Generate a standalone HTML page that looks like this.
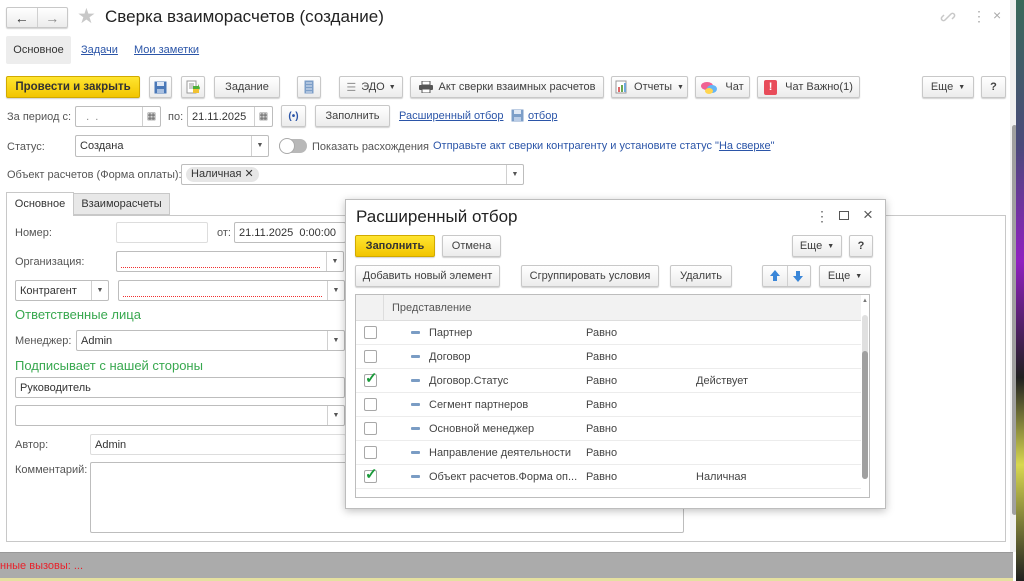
<!DOCTYPE html>
<html><head><meta charset="utf-8">
<style>
*{box-sizing:border-box;margin:0;padding:0}
body{width:1024px;height:581px;overflow:hidden;background:#fff;font-family:"Liberation Sans",Arial,sans-serif;font-size:11px;color:#404040;position:relative}
.a{position:absolute}
.btn{position:absolute;height:22px;border:1px solid #c8c8c8;border-radius:2px;background:linear-gradient(#fff,#ececec);box-shadow:0 1px 1px rgba(0,0,0,.18);display:flex;align-items:center;justify-content:center;color:#404040;font-size:11px;white-space:nowrap}
.yel{background:linear-gradient(#ffe530,#f2c500);border-color:#d1aa00;font-weight:bold;color:#333}
.fld{position:absolute;height:21px;border:1px solid #bdbdbd;border-radius:2px;background:#fff;padding-left:4px;padding-top:1px;line-height:19px;color:#333;font-size:11px}
.dd{position:absolute;right:0;top:0;bottom:0;width:17px;border-left:1px solid #d0d0d0;font-size:7px;color:#555;text-align:center;line-height:19px}
.lbl{position:absolute;color:#555;font-size:11px;line-height:14px}
.lnk{position:absolute;color:#2b55a8;text-decoration:underline;font-size:11px}
.grn{position:absolute;color:#38a84f;font-size:13px}
.red{position:absolute;left:4px;right:22px;bottom:3px;height:1px;background:repeating-linear-gradient(90deg,#f03030 0 1px,transparent 1px 2px)}
.row{position:absolute;left:0;right:8px;height:24px;border-bottom:1px solid #ececec}
.cb{position:absolute;left:8px;top:5px;width:13px;height:13px;border:1px solid #a8a8a8;border-radius:2px;background:#fff}
.dash{position:absolute;left:55px;top:10px;width:9px;height:3px;background:#7a9cc4;border-radius:1px}
.rt{position:absolute;top:6px;color:#444}
</style></head><body>

<div class="btn" style="left:6px;top:7px;width:62px;height:21px;justify-content:space-between;padding:0">
 <span style="width:30px;text-align:center;font-size:14px;color:#333">&#8592;</span><span style="width:1px;height:19px;background:#d0d0d0"></span><span style="width:30px;text-align:center;font-size:14px;color:#888">&#8594;</span></div>
<div class="a" style="left:77px;top:4px;font-size:21px;color:#c8c8c8">&#9733;</div>
<div class="a" style="left:105px;top:7px;font-size:17px;color:#222">Сверка взаиморасчетов (создание)</div>
<svg class="a" style="left:940px;top:9px" width="16" height="16" viewBox="0 0 16 16"><g fill="none" stroke="#c8c8c8" stroke-width="1.5"><path d="M7 9l-2 2a2 2 0 01-3-3l2-2M9 7l2-2a2 2 0 013 3l-2 2M6 10l4-4"/></g></svg>
<div class="a" style="left:972px;top:8px;font-size:14px;color:#aaa;line-height:16px">&#8942;</div>
<div class="a" style="left:993px;top:7px;font-size:14px;color:#aaa">&#215;</div>

<div class="a" style="left:6px;top:36px;width:65px;height:28px;background:#ededed;border-radius:2px;line-height:28px;text-align:center;color:#333">Основное</div>
<div class="lnk" style="left:81px;top:44px">Задачи</div>
<div class="lnk" style="left:134px;top:44px">Мои заметки</div>

<div class="btn yel" style="left:6px;top:76px;width:134px;font-size:11.5px">Провести и закрыть</div>
<div class="btn" style="left:149px;top:76px;width:23px"><svg width="13" height="13"><rect x="0.5" y="0.5" width="12" height="12" fill="#4a78b8"/><rect x="3" y="1" width="7" height="4" fill="#dfe8f5"/><rect x="3" y="8" width="7" height="4" fill="#a9c0e0"/></svg></div>
<div class="btn" style="left:181px;top:76px;width:24px"><svg width="14" height="14"><rect x="1" y="1" width="9" height="12" fill="#fff" stroke="#999"/><path d="M3 4h5M3 6h5M3 8h4" stroke="#999"/><path d="M7 6l5 0 0-2 2 4-2 4 0-2-5 0z" fill="#4caf3a"/><rect x="7" y="9" width="6" height="4" fill="#f1c232"/></svg></div>
<div class="btn" style="left:214px;top:76px;width:66px">Задание</div>
<div class="btn" style="left:297px;top:76px;width:24px"><svg width="10" height="14"><rect x="0.5" y="0.5" width="9" height="13" fill="#7c9ec8"/><path d="M2 3h6M2 6h6M2 9h6M2 12h6" stroke="#dfe8f5"/></svg></div>
<div class="btn" style="left:339px;top:76px;width:64px"><span style="color:#999;margin-right:5px">&#9776;</span>ЭДО <span style="font-size:7px;margin-left:4px">&#9660;</span></div>
<div class="btn" style="left:410px;top:76px;width:194px"><svg width="14" height="12" style="margin-right:6px"><rect x="3" y="0" width="8" height="4" fill="#fff" stroke="#555"/><rect x="0" y="4" width="14" height="5" rx="1" fill="#555"/><rect x="3" y="8" width="8" height="4" fill="#fff" stroke="#555"/></svg>Акт сверки взаимных расчетов</div>
<div class="btn" style="left:611px;top:76px;width:77px"><svg width="14" height="14" style="margin-right:5px"><rect x="1" y="1" width="10" height="12" fill="#fff" stroke="#999"/><rect x="3" y="7" width="2" height="5" fill="#e06666"/><rect x="6" y="5" width="2" height="7" fill="#6aa84f"/><rect x="9" y="3" width="2" height="9" fill="#6fa8dc"/></svg>Отчеты <span style="font-size:7px;margin-left:5px">&#9660;</span></div>
<div class="btn" style="left:695px;top:76px;width:55px"><svg width="16" height="13" style="margin-right:8px"><ellipse cx="6" cy="5" rx="6" ry="4" fill="#f06292"/><ellipse cx="11" cy="8" rx="5" ry="4" fill="#64b5f6"/><ellipse cx="8" cy="10" rx="4" ry="3" fill="#ffd54f"/></svg>Чат</div>
<div class="btn" style="left:757px;top:76px;width:103px"><span style="display:inline-block;width:13px;height:15px;background:#e84c5a;color:#fff;font-weight:bold;text-align:center;line-height:15px;border-radius:2px;margin-right:8px">!</span>Чат Важно(1)</div>
<div class="btn" style="left:922px;top:76px;width:52px">Еще <span style="font-size:7px;margin-left:5px">&#9660;</span></div>
<div class="btn" style="left:981px;top:76px;width:25px;font-weight:bold">?</div>

<div class="lbl" style="left:7px;top:110px">За период с:</div>
<div class="fld" style="left:75px;top:106px;width:86px;color:#888">&nbsp; .&nbsp; .<div class="dd" style="width:18px;font-size:10px;color:#666">&#9638;</div></div>
<div class="lbl" style="left:168px;top:110px">по:</div>
<div class="fld" style="left:187px;top:106px;width:86px">21.11.2025<div class="dd" style="width:18px;font-size:10px;color:#666">&#9638;</div></div>
<div class="btn" style="left:281px;top:105px;width:25px;color:#2b55a8;font-weight:bold;font-size:10px">(•)</div>
<div class="btn" style="left:315px;top:105px;width:75px">Заполнить</div>
<div class="lnk" style="left:399px;top:110px">Расширенный отбор</div>
<svg class="a" style="left:511px;top:109px" width="13" height="13"><rect x="0.5" y="0.5" width="12" height="12" fill="#7c9ec8"/><rect x="3" y="1" width="7" height="4" fill="#dfe8f5"/><rect x="3" y="8" width="7" height="4" fill="#b9cce6"/></svg>
<div class="lnk" style="left:528px;top:110px">отбор</div>

<div class="lbl" style="left:7px;top:140px">Статус:</div>
<div class="fld" style="left:75px;top:135px;width:194px;height:22px">Создана<div class="dd" style="line-height:20px">&#9660;</div></div>
<div class="a" style="left:279px;top:139px;width:28px;height:14px;border-radius:7px;background:#b8b8b8"></div>
<div class="a" style="left:279px;top:138px;width:16px;height:16px;border-radius:8px;background:#fff;border:1px solid #aaa"></div>
<div class="lbl" style="left:312px;top:140px">Показать расхождения</div>
<div class="a" style="left:433px;top:140px;color:#2b55a8">Отправьте акт сверки контрагенту и установите статус "<u>На сверке</u>"</div>

<div class="lbl" style="left:7px;top:168px">Объект расчетов (Форма оплаты):</div>
<div class="fld" style="left:181px;top:164px;width:343px;height:21px;padding-top:0"><span style="display:inline-block;background:#e6e6e6;border-radius:9px;padding:0 5px;line-height:15px;margin-top:2px">Наличная ✕</span><div class="dd">&#9660;</div></div>

<div class="a" style="left:6px;top:215px;width:1000px;height:327px;border:1px solid #c8c8c8"></div>
<div class="a" style="left:6px;top:192px;width:68px;height:24px;border:1px solid #c8c8c8;border-bottom:none;background:#fff;line-height:22px;text-align:center;color:#333">Основное</div>
<div class="a" style="left:73px;top:193px;width:97px;height:22px;border:1px solid #c8c8c8;background:#e8e8e8;line-height:20px;text-align:center;color:#333">Взаиморасчеты</div>

<div class="lbl" style="left:15px;top:226px">Номер:</div>
<div class="fld" style="left:116px;top:222px;width:92px;border-color:#ddd"></div>
<div class="lbl" style="left:217px;top:226px">от:</div>
<div class="fld" style="left:234px;top:222px;width:112px">21.11.2025&nbsp; 0:00:00</div>
<div class="lbl" style="left:15px;top:255px">Организация:</div>
<div class="fld" style="left:116px;top:251px;width:228px"><div class="red"></div><div class="dd">&#9660;</div></div>
<div class="fld" style="left:15px;top:280px;width:94px">Контрагент<div class="dd">&#9660;</div></div>
<div class="fld" style="left:118px;top:280px;width:227px"><div class="red"></div><div class="dd">&#9660;</div></div>
<div class="grn" style="left:15px;top:307px">Ответственные лица</div>
<div class="lbl" style="left:15px;top:334px">Менеджер:</div>
<div class="fld" style="left:76px;top:330px;width:269px">Admin<div class="dd">&#9660;</div></div>
<div class="grn" style="left:15px;top:358px">Подписывает с нашей стороны</div>
<div class="fld" style="left:15px;top:377px;width:330px">Руководитель</div>
<div class="fld" style="left:15px;top:405px;width:330px"><div class="dd">&#9660;</div></div>
<div class="lbl" style="left:15px;top:438px">Автор:</div>
<div class="fld" style="left:90px;top:434px;width:256px;border-color:#ddd">Admin</div>
<div class="lbl" style="left:15px;top:463px">Комментарий:</div>
<div class="fld" style="left:90px;top:462px;width:594px;height:71px"></div>

<div class="a" style="left:0;top:552px;width:1013px;height:27px;background:#ababab;border-top:1px solid #999"></div>
<div class="a" style="left:0;top:560px;color:#e8202a;font-size:11px">нные вызовы: ...</div>
<div class="a" style="left:0;top:578px;width:1013px;height:3px;background:#e5e0a0"></div>
<div class="a" style="left:1010px;top:0;width:6px;height:552px;background:#f0f0f0"></div>
<div class="a" style="left:1012px;top:125px;width:5px;height:390px;background:#a0a0a0;border-radius:3px"></div>
<div class="a" style="left:1016px;top:0;width:8px;height:581px;background:linear-gradient(#3a6a5a,#4a4a7a 25%,#9020c0 45%,#202020 65%,#d8d850 80%,#202020)"></div>

<div class="a" style="left:345px;top:199px;width:541px;height:310px;background:#fff;border:1px solid #bdbdbd;box-shadow:0 2px 8px rgba(0,0,0,.25)">
 <div class="a" style="left:10px;top:7px;font-size:17px;color:#222">Расширенный отбор</div>
 <div class="a" style="left:469px;top:8px;font-size:14px;color:#666">&#8942;</div>
 <div class="a" style="left:493px;top:11px;width:10px;height:9px;border:1.5px solid #555"></div>
 <div class="a" style="left:517px;top:5px;font-size:17px;color:#555">&#215;</div>
 <div class="btn yel" style="left:9px;top:35px;width:80px">Заполнить</div>
 <div class="btn" style="left:96px;top:35px;width:59px">Отмена</div>
 <div class="btn" style="left:446px;top:35px;width:50px">Еще <span style="font-size:7px;margin-left:5px">&#9660;</span></div>
 <div class="btn" style="left:503px;top:35px;width:24px;font-weight:bold">?</div>
 <div class="btn" style="left:9px;top:65px;width:145px">Добавить новый элемент</div>
 <div class="btn" style="left:175px;top:65px;width:138px">Сгруппировать условия</div>
 <div class="btn" style="left:324px;top:65px;width:62px">Удалить</div>
 <div class="btn" style="left:416px;top:65px;width:49px;padding:0;justify-content:space-between"><svg width="24" height="20"><path d="M12 4l5 6h-3v5h-4v-5H7z" fill="#3a86d8"/></svg><span style="width:1px;height:20px;background:#d0d0d0"></span><svg width="23" height="20"><path d="M11 16l5-6h-3V5H9v5H6z" fill="#3a86d8"/></svg></div>
 <div class="btn" style="left:473px;top:65px;width:52px">Еще <span style="font-size:7px;margin-left:5px">&#9660;</span></div>
 <div class="a" style="left:9px;top:94px;width:515px;height:204px;border:1px solid #bdbdbd;overflow:hidden">
  <div class="a" style="left:0;top:0;right:8px;height:26px;background:#f2f2f2;border-bottom:1px solid #ddd"></div>
  <div class="a" style="left:27px;top:0;width:1px;height:26px;background:#ddd"></div>
  <div class="a" style="left:36px;top:7px;color:#555">Представление</div>
  <div class="row" style="top:26px"><div class="cb"></div><div class="dash"></div><div class="rt" style="left:73px">Партнер</div><div class="rt" style="left:230px">Равно</div></div>
  <div class="row" style="top:50px"><div class="cb"></div><div class="dash"></div><div class="rt" style="left:73px">Договор</div><div class="rt" style="left:230px">Равно</div></div>
  <div class="row" style="top:74px"><div class="cb"></div><div class="a" style="left:9px;top:0;color:#1a9a3a;font-size:15px;font-weight:bold">&#10003;</div><div class="dash"></div><div class="rt" style="left:73px">Договор.Статус</div><div class="rt" style="left:230px">Равно</div><div class="rt" style="left:340px">Действует</div></div>
  <div class="row" style="top:98px"><div class="cb"></div><div class="dash"></div><div class="rt" style="left:73px">Сегмент партнеров</div><div class="rt" style="left:230px">Равно</div></div>
  <div class="row" style="top:122px"><div class="cb"></div><div class="dash"></div><div class="rt" style="left:73px">Основной менеджер</div><div class="rt" style="left:230px">Равно</div></div>
  <div class="row" style="top:146px"><div class="cb"></div><div class="dash"></div><div class="rt" style="left:73px">Направление деятельности</div><div class="rt" style="left:230px">Равно</div></div>
  <div class="row" style="top:170px"><div class="cb"></div><div class="a" style="left:9px;top:0;color:#1a9a3a;font-size:15px;font-weight:bold">&#10003;</div><div class="dash"></div><div class="rt" style="left:73px">Объект расчетов.Форма оп...</div><div class="rt" style="left:230px">Равно</div><div class="rt" style="left:340px">Наличная</div></div>
  <div class="a" style="right:1px;top:20px;width:6px;height:164px;background:#e0e0e0;border-radius:3px"></div>
  <div class="a" style="right:1px;top:56px;width:6px;height:128px;background:#a0a0a0;border-radius:3px"></div>
  <div class="a" style="right:1px;top:3px;font-size:6px;color:#777">&#9650;</div>
 </div>
</div>
</body></html>
